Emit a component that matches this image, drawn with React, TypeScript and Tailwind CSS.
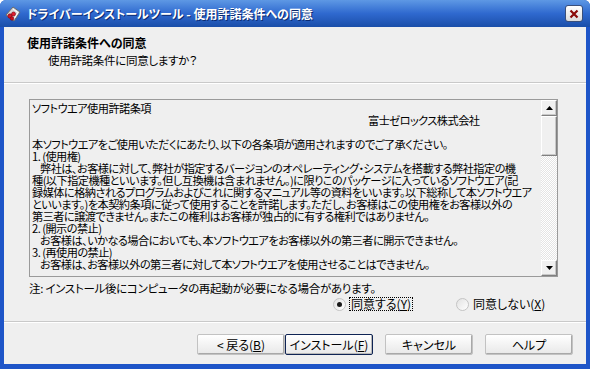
import React from "react";

const jp = "font-['Noto_Sans_CJK_JP','Noto_Sans_CJK_SC',sans-serif] [font-feature-settings:'palt']";

const licenseLines: { text: string; indent?: boolean; right?: boolean }[] = [
  { text: "ソフトウエア使用許諾条項" },
  { text: "富士ゼロックス株式会社", right: true },
  { text: "" },
  { text: "本ソフトウエアをご使用いただくにあたり、以下の各条項が適用されますのでご了承ください。" },
  { text: "1. (使用権)" },
  { text: "弊社は、お客様に対して、弊社が指定するバージョンのオペレーティング・システムを搭載する弊社指定の機", indent: true },
  { text: "種(以下指定機種といいます。但し互換機は含まれません。)に限りこのパッケージに入っているソフトウエア(記" },
  { text: "録媒体に格納されるプログラムおよびこれに関するマニュアル等の資料をいいます。以下総称して本ソフトウエア" },
  { text: "といいます。)を本契約条項に従って使用することを許諾します。ただし、お客様はこの使用権をお客様以外の" },
  { text: "第三者に譲渡できません。またこの権利はお客様が独占的に有する権利ではありません。" },
  { text: "2. (開示の禁止)" },
  { text: "お客様は、いかなる場合においても、本ソフトウエアをお客様以外の第三者に開示できません。", indent: true },
  { text: "3. (再使用の禁止)" },
  { text: "お客様は、お客様以外の第三者に対して本ソフトウエアを使用させることはできません。", indent: true },
];

const AppIcon = () => (
  <svg width="16" height="16" viewBox="0 0 16 16">
    <path d="M8 1 L15 6 L9 15 L1 9 Z" fill="#d8d8d8" stroke="#6b6b6b" strokeWidth="1" />
    <path d="M8 3 L13 6.5 L9 13" fill="none" stroke="#ffffff" strokeWidth="1" />
    <circle cx="5" cy="10" r="2.2" fill="#d11a2a" stroke="#7a0010" strokeWidth="0.6" />
    <circle cx="8.5" cy="8" r="2" fill="#e02030" stroke="#7a0010" strokeWidth="0.6" />
    <circle cx="7" cy="12.5" r="1.8" fill="#c8101e" stroke="#7a0010" strokeWidth="0.6" />
  </svg>
);

const Arrow = ({ down }: { down?: boolean }) => (
  <svg width="7" height="4" viewBox="0 0 7 4">
    <path d={down ? "M0 0 H7 L3.5 4 Z" : "M0 4 H7 L3.5 0 Z"} fill="#000" />
  </svg>
);

const ScrollButton = ({ down }: { down?: boolean }) => (
  <div className="h-[16px] w-[16px] flex items-center justify-center bg-[#f0f0f0] border border-t-white border-l-white border-r-[#808080] border-b-[#808080] shadow-[inset_-1px_-1px_0_#c8c8c8]">
    <Arrow down={down} />
  </div>
);

const Radio = ({ checked }: { checked?: boolean }) => (
  <span className="w-[13px] h-[13px] rounded-full border border-[#c4c4c4] bg-gradient-to-br from-[#e2e2e2] to-white flex items-center justify-center">
    {checked && <span className="w-[5px] h-[5px] rounded-full bg-[#1a1a1a]" />}
  </span>
);

const Button = ({ children, isDefault }: { children: React.ReactNode; isDefault?: boolean }) => (
  <button
    className={
      isDefault
        ? "w-[88px] h-[21px] rounded-[2px] border border-[#0f2454] bg-gradient-to-b from-white to-[#e8e8e8] shadow-[inset_-1px_-1px_0_#b8b8b8] text-[12px] text-black leading-none"
        : "w-[88px] h-[21px] rounded-[2px] border border-[#c2c2c2] bg-gradient-to-b from-white to-[#e8e8e8] shadow-[inset_-1px_-1px_0_#a8a8a8] text-[12px] text-black leading-none"
    }
  >
    {children}
  </button>
);

export default function App() {
  return (
    <div className={`w-[590px] h-[369px] bg-[#1e55c8] rounded-t-[6px] flex flex-col ${jp}`}>
      {/* title bar */}
      <div className="h-[27px] shrink-0 rounded-t-[6px] bg-gradient-to-b from-[#5e98e4] via-[#2f69cf] to-[#1a4ea9] flex items-center pl-[5px] pr-[7px]">
        <AppIcon />
        <span className="ml-[6px] text-white font-bold text-[12px] [text-shadow:1px_1px_0_#0a2a70] whitespace-nowrap">
          ドライバーインストールツール - 使用許諾条件への同意
        </span>
        <div className="ml-auto w-[18px] h-[17px] rounded-[3px] border border-[#3a4f7a] bg-gradient-to-b from-white to-[#dcdcdc] flex items-center justify-center">
          <svg width="10" height="10" viewBox="0 0 10 10">
            <path d="M1.5 1.5 L8.5 8.5 M8.5 1.5 L1.5 8.5" stroke="#8a0a0a" strokeWidth="2.2" />
          </svg>
        </div>
      </div>

      {/* body */}
      <div className="mx-[4px] h-[337px] bg-[#efefef] flex flex-col text-black">
        {/* header */}
        <div className="h-[55px] pt-[8px] flex flex-col">
          <div className="pl-[23px] text-[12px] font-bold leading-[16px]">使用許諾条件への同意</div>
          <div className="pl-[44px] text-[11.5px] tracking-[-0.3px] leading-[18px]">使用許諾条件に同意しますか？</div>
        </div>
        <div className="h-[2px] border-t border-[#c9c9c9] border-b border-b-white" />

        {/* content */}
        <div className="pl-[25px] pt-[15px] flex flex-col">
          <div className="w-[529px] h-[178px] border border-[#9a9a9a] flex">
            <div className="flex-1 overflow-hidden pl-[2px] pt-[2px] text-[11.2px] tracking-[-0.55px] leading-[12px]">
              {licenseLines.map((l, i) => (
                <div
                  key={i}
                  className={
                    l.right
                      ? "h-[12px] whitespace-nowrap pl-[336px]"
                      : l.indent
                      ? "h-[12px] whitespace-nowrap pl-[8px]"
                      : "h-[12px] whitespace-nowrap"
                  }
                >
                  {l.text}
                </div>
              ))}
            </div>
            <div className="w-[16px] flex flex-col">
              <ScrollButton />
              <div className="h-[40px] bg-[#f0f0f0] border border-t-white border-l-white border-r-[#808080] border-b-[#808080] shadow-[inset_-1px_-1px_0_#c8c8c8]" />
              <div className="flex-1 bg-[repeating-conic-gradient(#ffffff_0_25%,#e4e4e4_0_50%)] bg-[length:2px_2px]" />
              <ScrollButton down />
            </div>
          </div>

          <div className="mt-[4px] h-[14px] text-[11.5px] tracking-[-0.3px] leading-[14px] whitespace-nowrap">
            注: インストール後にコンピュータの再起動が必要になる場合があります。
          </div>

          <div className="mt-[2px] h-[14px] flex items-center pl-[304px] text-[12px]">
            <div className="w-[123px] flex items-center">
              <Radio checked />
              <span className="ml-[3px] px-[1px] leading-[12px] border border-dotted border-black">
                同意する(<span className="underline">Y</span>)
              </span>
            </div>
            <div className="flex items-center">
              <Radio />
              <span className="ml-[4px] leading-[12px]">
                同意しない(<span className="underline">X</span>)
              </span>
            </div>
          </div>
        </div>

        <div className="mt-[10px] h-[2px] border-t border-[#c9c9c9] border-b border-b-white" />

        {/* buttons */}
        <div className="mt-[11px] flex justify-end pr-[13px]">
          <Button>
            &lt; 戻る(<span className="underline">B</span>)
          </Button>
          <Button isDefault>
            インストール(<span className="underline">F</span>)
          </Button>
          <div className="w-[12px]" />
          <Button>キャンセル</Button>
          <div className="w-[12px]" />
          <Button>ヘルプ</Button>
        </div>
      </div>
    </div>
  );
}
